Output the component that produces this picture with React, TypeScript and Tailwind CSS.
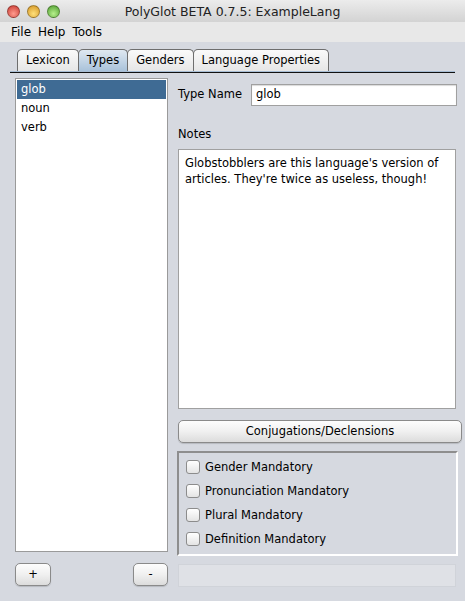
const font = { fontFamily: '"DejaVu Sans", "Lucida Grande", sans-serif' };

const tabs = ['Lexicon', 'Types', 'Genders', 'Language Properties'];
const types = ['glob', 'noun', 'verb'];
const flags = ['Gender Mandatory', 'Pronunciation Mandatory', 'Plural Mandatory', 'Definition Mandatory'];

function Light({ from, to }: { from: string; to: string }) {
  return (
    <span
      className="h-[13px] w-[13px] rounded-full border border-black/30"
      style={{ background: `radial-gradient(circle at 50% 70%, ${to}, ${from})` }}
    />
  );
}

function MacButton({ children, className = '' }: { children: React.ReactNode; className?: string }) {
  return (
    <button className={`flex items-center justify-center rounded-[5px] border border-[#8a8a8a] bg-gradient-to-b from-[#fdfdfd] via-[#f0f0f0] to-[#dcdcdc] text-[11.5px] text-black shadow-[0_1px_1px_rgba(0,0,0,0.15)] ${className}`}>
      {children}
    </button>
  );
}

export default function App() {
  return (
    <div className="flex h-[601px] w-[465px] flex-col overflow-hidden bg-[#d6d9e0] text-[11.5px] text-black" style={font}>
      {/* title bar */}
      <div className="relative flex h-[22px] items-center bg-gradient-to-b from-[#ececec] to-[#d3d3d3] px-[7px]">
        <div className="flex gap-[7px]">
          <Light from="#c8362e" to="#ff9c8f" />
          <Light from="#d39320" to="#ffe07a" />
          <Light from="#4d9c2d" to="#b7f08d" />
        </div>
        <div className="absolute inset-x-0 top-[3px] text-center text-[12.5px] text-[#222]">PolyGlot BETA 0.7.5: ExampleLang</div>
      </div>

      {/* menu bar */}
      <div className="flex h-[20px] items-center gap-[7px] bg-[#e8e8e8] px-[11px] text-[12px]">
        <span>File</span>
        <span>Help</span>
        <span>Tools</span>
      </div>

      {/* tabs */}
      <div className="flex items-end px-[17px] pt-[7px]">
        {tabs.map(t => (
          <div
            key={t}
            className={`-mr-px flex h-[22px] items-center rounded-t-[5px] border border-b-0 border-[#6e6e6e] px-[8px] ${
              t === 'Types' ? 'bg-gradient-to-b from-[#dfe8f1] to-[#a9c2da]' : 'bg-gradient-to-b from-[#fafafa] to-[#e6e6e6]'
            }`}
          >
            {t}
          </div>
        ))}
      </div>
      <div className="mx-[10px] h-px bg-[#a7bdd4]" />
      <div className="mx-[10px] h-px bg-[#111]" />

      {/* body */}
      <div className="flex flex-1 gap-[10px] pl-[15px] pr-[8px] pt-[5px]">
        {/* left column */}
        <div className="flex w-[153px] flex-col">
          <div className="h-[474px] border border-[#9a9a9a] bg-white pt-px">
            {types.map(t => (
              <div
                key={t}
                className={`h-[19px] leading-[18px] ${t === 'glob' ? 'mx-px bg-[#3f6b94] px-[4px] text-white' : 'px-[5px]'}`}
              >
                {t}
              </div>
            ))}
          </div>
          <div className="mt-[11px] flex justify-between">
            <MacButton className="h-[23px] w-[36px]">+</MacButton>
            <MacButton className="h-[23px] w-[35px]">-</MacButton>
          </div>
        </div>

        {/* right column */}
        <div className="flex flex-1 flex-col">
          <div className="flex items-center gap-[9px] pt-[6px]">
            <span>Type Name</span>
            <div className="flex h-[22px] flex-1 items-center border border-[#a0a0a0] bg-white px-[4px] shadow-[inset_0_1px_1px_rgba(0,0,0,0.15)]">glob</div>
          </div>
          <div className="mt-[20px]">Notes</div>
          <div className="mr-[1px] mt-[6px] h-[260px] border border-[#a0a0a0] bg-white px-[6px] py-[5px] leading-[16px]">
            Globstobblers are this language's version of articles. They're twice as useless, though!
          </div>
          <MacButton className="mr-[-5px] mt-[11px] h-[23px]">Conjugations/Declensions</MacButton>
          <div className="ml-[-1px] mr-[-1px] mt-[8px] flex h-[105px] flex-col gap-[10px] border-2 border-b-white border-l-[#8e8e8e] border-r-white border-t-[#8e8e8e] px-[7px] pt-[7px]">
            {flags.map(f => (
              <label key={f} className="flex h-[14px] items-center gap-[5px]">
                <span className="h-[14px] w-[14px] rounded-[3px] border border-[#8c8c8c] bg-gradient-to-b from-white to-[#e4e4e4]" />
                <span>{f}</span>
              </label>
            ))}
          </div>
          <div className="mr-[1px] mt-[8px] h-[23px] border border-[#d0d3d9] bg-[#dfe1e6]" />
        </div>
      </div>
    </div>
  );
}
